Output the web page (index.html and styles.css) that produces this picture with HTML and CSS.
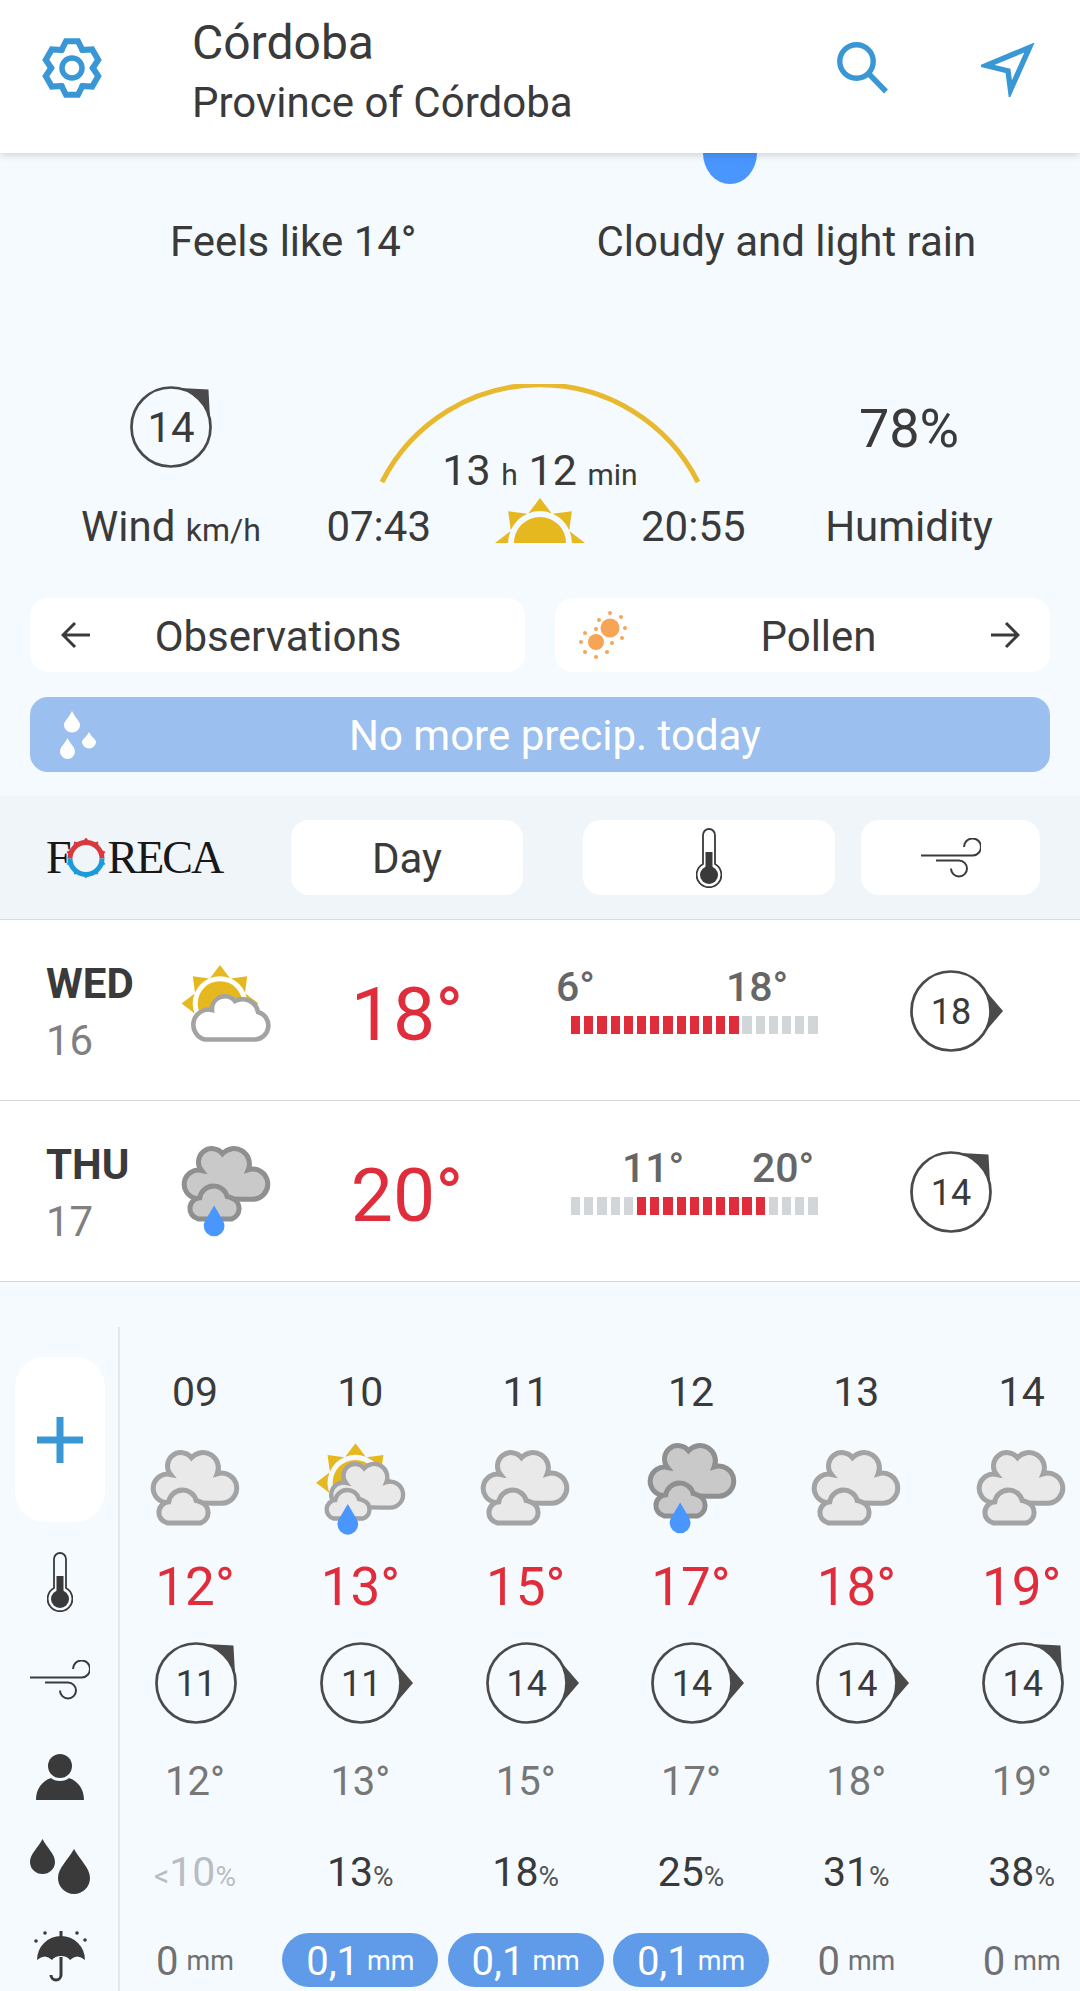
FILE: index.html
```html
<!DOCTYPE html>
<html lang="en">
<head>
<meta charset="utf-8">
<title>Córdoba weather</title>
<link rel="stylesheet" href="styles.css">
</head>
<body>
<svg class="defs" aria-hidden="true">
  <defs>
    <path id="drop" d="M553 567C575 605 584 615 584 628A31 31 0 0 1 522 628C522 615 531 605 553 567Z" fill="#4a96ff" stroke="none"/>
    <path id="cloud-back" d="M497 545A38 38 0 0 1 515 462A40 40 0 0 1 578 412A46 46 0 0 1 655 460A45 45 0 1 1 668 548L640 548Z"/>
    <path id="cloud-front" d="M505 607H606A33 33 0 0 0 606 545A40 40 0 0 0 592 540A42 42 0 0 0 510 544A32 32 0 0 0 505 607Z"/>
    <path id="ray" d="M0-50L13-32.9A35.4 35.4 0 0 0-13-32.9Z"/>
    <g id="sun" fill="#e6b820" stroke="none">
      <use href="#ray"/>
      <use href="#ray" transform="rotate(45)"/>
      <use href="#ray" transform="rotate(-45)"/>
      <use href="#ray" transform="rotate(90)"/>
      <use href="#ray" transform="rotate(-90)"/>
      <circle r="29"/>
    </g>
    <g id="wind-e">
      <circle cx="50" cy="50" r="38" fill="none" stroke="#4a4a4a" stroke-width="2.6"/>
      <path d="M76.9 23.1L100 50L76.9 76.9A38 38 0 0 0 76.9 23.1Z" fill="#4a4a4a"/>
    </g>
    <g id="wind-ne">
      <circle cx="50" cy="50" r="38" fill="none" stroke="#4a4a4a" stroke-width="2.6"/>
      <path d="M50 12L86 14L88 50A38 38 0 0 0 50 12Z" fill="#4a4a4a"/>
    </g>
    <g id="gauge">
      <path d="M7 36V7A6 6 0 0 1 19 7V36A12.4 12.4 0 1 1 7 36Z" fill="none" stroke="#3a3a3a" stroke-width="1.8"/>
      <rect x="9.5" y="24" width="7" height="24" fill="#3a3a3a"/>
      <circle cx="13" cy="47" r="9" fill="#3a3a3a"/>
    </g>
    <g id="gust" fill="none" stroke="#3a3a3a" stroke-width="2">
      <path d="M0 17.5H52A8.5 8.5 0 1 0 43 9"/>
      <path d="M15 22.5H38A8 8 0 1 1 30 30.5"/>
    </g>
    <path id="tooth" d="M-10.4-18L-6-26.800H6L10.400-18"/>
    <path id="nub" d="M-3-17L0-20.500L3-17Z"/>
  </defs>
</svg>

<header class="top-bar">
  <svg class="gear" viewBox="-30 -30 60 60">
    <use href="#tooth"/>
    <use href="#tooth" transform="rotate(60)"/>
    <use href="#tooth" transform="rotate(120)"/>
    <use href="#tooth" transform="rotate(180)"/>
    <use href="#tooth" transform="rotate(240)"/>
    <use href="#tooth" transform="rotate(300)"/>
    <circle class="gear-hub" r="10"/>
  </svg>
  <div class="place">
    <div class="city">Córdoba</div>
    <div class="province">Province of Córdoba</div>
  </div>
  <svg class="search" viewBox="0 0 54 54"><circle cx="19.5" cy="19.5" r="16.7"/><path d="M31 31L49 49.500"/></svg>
  <svg class="nav" viewBox="0 0 54 54"><path d="M48.500 4.500L5 22.500L27 28L29.500 47Z"/></svg>
</header>
<div class="blob"></div>

<section class="now">
  <span>Feels like 14°</span>
  <span>Cloudy and light rain</span>
</section>

<section class="stats">
  <div class="stat">
    <div class="stat-top">
      <div class="wind wind-lg"><svg class="ring" viewBox="0 0 100 100"><use href="#wind-ne"/></svg><span>14</span></div>
    </div>
    <div class="stat-label">Wind <small>km/h</small></div>
  </div>
  <div class="daylight">
    <div class="arc-box">
      <svg class="arc" viewBox="0 0 320 100"><path d="M2 98A177 177 0 0 1 318 98"/></svg>
      <div class="length">13 <small>h</small> 12 <small>min</small></div>
    </div>
    <div class="times">
      <span>07:43</span>
      <svg class="sunrise" viewBox="-50 -50 100 50"><use href="#sun"/></svg>
      <span>20:55</span>
    </div>
  </div>
  <div class="stat">
    <div class="stat-top humidity">78%</div>
    <div class="stat-label">Humidity</div>
  </div>
</section>

<section class="links">
  <div class="link">
    <svg class="arrow" viewBox="0 0 30 28"><path d="M29 14H2M14 2L2 14L14 26"/></svg>
    <span class="link-label">Observations</span>
  </div>
  <div class="link">
    <svg class="pollen" viewBox="0 0 48 48">
      <circle cx="31" cy="17" r="9.5"/><circle cx="17" cy="31" r="8"/>
      <circle cx="31" cy="2" r="2"/><circle cx="42" cy="6" r="2"/><circle cx="46" cy="17" r="2"/><circle cx="43" cy="27" r="2"/><circle cx="33" cy="32" r="2"/><circle cx="20" cy="9" r="2"/><circle cx="17" cy="18" r="2"/>
      <circle cx="6" cy="22" r="2"/><circle cx="2" cy="31" r="2"/><circle cx="6" cy="41" r="2"/><circle cx="17" cy="46" r="2"/><circle cx="28" cy="41" r="2"/>
    </svg>
    <span class="link-label pollen-label">Pollen</span>
    <svg class="arrow" viewBox="0 0 30 28"><path d="M1 14H28M16 2L28 14L16 26"/></svg>
  </div>
</section>

<section class="banner">
  <svg class="rain" viewBox="0 0 37 48">
    <path d="M12 0C16 8 20 10 20 14A8 7.5 0 0 1 4 14C4 10 8 8 12 0Z"/>
    <path d="M29 21C32 27 36 28 36 31A7 6.5 0 0 1 22 31C22 28 26 27 29 21Z"/>
    <path d="M7.500 27C11 34 15 36 15 40.500A7.500 7.500 0 0 1 0 40.500C0 36 4 34 7.500 27Z"/>
  </svg>
  <span class="banner-text">No more precip. today</span>
</section>

<section class="tabs">
  <div class="logo" aria-label="Foreca">
    <span>F</span>
    <svg class="logo-ring" viewBox="0 0 40 40">
      <path class="ring-red" d="M4 20.500A16 16 0 0 1 36 20.500"/>
      <path class="ring-blue" d="M36 20.500A16 16 0 0 1 4 20.500"/>
      <g class="nub-red" transform="translate(20 20)">
        <use href="#nub"/><use href="#nub" transform="rotate(36)"/><use href="#nub" transform="rotate(-36)"/><use href="#nub" transform="rotate(72)"/><use href="#nub" transform="rotate(-72)"/>
      </g>
      <g class="nub-blue" transform="translate(20 20)">
        <use href="#nub" transform="rotate(180)"/><use href="#nub" transform="rotate(144)"/><use href="#nub" transform="rotate(-144)"/><use href="#nub" transform="rotate(108)"/><use href="#nub" transform="rotate(-108)"/>
      </g>
    </svg>
    <span>RECA</span>
  </div>
  <div class="tab tab-day"><span>Day</span></div>
  <div class="tab tab-temp"><svg class="gauge-icon" viewBox="0 0 26 60"><use href="#gauge"/></svg></div>
  <div class="tab tab-wind"><svg class="gust-icon" viewBox="0 0 60 40"><use href="#gust"/></svg></div>
</section>

<section class="day-row">
  <div class="day"><b>WED</b><span>16</span></div>
  <svg class="wx-day sun-cloud" viewBox="0 0 90 78">
    <use href="#sun" transform="translate(39 38.500) scale(.77)"/>
    <path d="M24 74.500H74A14 14 0 0 0 77 47A16 16 0 0 0 54 36A13 13 0 0 0 31 45A15 15 0 0 0 24 74.500Z"/>
  </svg>
  <div class="day-temp">18°</div>
  <div class="range">
    <div class="range-labels"><span class="lo-6">6°</span><span>18°</span></div>
    <div class="bar">
      <i class="on"></i><i class="on"></i><i class="on"></i><i class="on"></i><i class="on"></i><i class="on"></i><i class="on"></i><i class="on"></i><i class="on"></i><i class="on"></i><i class="on"></i><i class="on"></i><i class="on"></i><i></i><i></i><i></i><i></i><i></i><i></i>
    </div>
  </div>
  <div class="day-wind"><div class="wind"><svg class="ring" viewBox="0 0 100 100"><use href="#wind-e"/></svg><span>18</span></div></div>
</section>

<section class="day-row">
  <div class="day"><b>THU</b><span>17</span></div>
  <svg class="wx-day dark" viewBox="445 380 290 290"><use href="#cloud-back"/><use href="#cloud-front"/><use href="#drop"/></svg>
  <div class="day-temp">20°</div>
  <div class="range">
    <div class="range-labels"><span class="lo-11">11°</span><span>20°</span></div>
    <div class="bar">
      <i></i><i></i><i></i><i></i><i></i><i class="on"></i><i class="on"></i><i class="on"></i><i class="on"></i><i class="on"></i><i class="on"></i><i class="on"></i><i class="on"></i><i class="on"></i><i class="on"></i><i></i><i></i><i></i><i></i>
    </div>
  </div>
  <div class="day-wind"><div class="wind"><svg class="ring" viewBox="0 0 100 100"><use href="#wind-ne"/></svg><span>14</span></div></div>
</section>

<section class="hourly">
  <aside class="side">
    <div class="plus"><svg class="plus-icon" viewBox="0 0 46 46"><path d="M23 0V46M0 23H46"/></svg></div>
    <svg class="gauge-icon" viewBox="0 0 26 60"><use href="#gauge"/></svg>
    <svg class="gust-icon" viewBox="0 0 60 40"><use href="#gust"/></svg>
    <svg class="person" viewBox="0 0 48 46"><circle cx="24" cy="12" r="12"/><path d="M0 46C0 35 6 27 15 24C19 28 29 28 33 24C42 27 48 35 48 46Z"/></svg>
    <svg class="drops" viewBox="0 0 60 55">
      <path d="M12.500 0C17 9 25 15 25 23A12.500 12 0 0 1 0 23C0 15 8 9 12.500 0Z"/>
      <path d="M44 10C50 21 60 29 60 39A16 16 0 0 1 28 39C28 29 38 21 44 10Z"/>
    </svg>
    <svg class="umbrella" viewBox="0 0 53 54">
      <path d="M3 31A24 24 0 0 1 51 31Q43 24 36 31Q33 27 27 27Q21 27 18 31Q11 24 3 31Z"/>
      <rect x="25.500" y="2" width="3" height="6"/>
      <path class="handle" d="M27 28V46A5 5 0 0 1 17 46"/>
      <circle cx="11" cy="4" r="1.800"/><circle cx="43" cy="4" r="1.800"/><circle cx="2" cy="12" r="1.800"/><circle cx="51" cy="11" r="1.800"/>
    </svg>
  </aside>
  <div class="hours">
    <div class="hour">09</div><div class="hour">10</div><div class="hour">11</div><div class="hour">12</div><div class="hour">13</div><div class="hour">14</div>

    <svg class="wx light" viewBox="445 380 290 290"><use href="#cloud-back"/><use href="#cloud-front"/></svg>
    <svg class="wx wx-sun light" viewBox="935 365 290 290">
      <use href="#sun" transform="translate(1065 487) scale(2.36)"/>
      <use href="#cloud-back" transform="translate(593.200 89.200) scale(.861)"/>
      <use href="#cloud-front" transform="translate(560.700 65.700) scale(.87)"/>
      <use href="#drop" transform="translate(489 -17)"/>
    </svg>
    <svg class="wx light" viewBox="445 380 290 290"><use href="#cloud-back"/><use href="#cloud-front"/></svg>
    <svg class="wx wx-dark dark" viewBox="445 380 290 290"><use href="#cloud-back"/><use href="#cloud-front"/><use href="#drop"/></svg>
    <svg class="wx light" viewBox="445 380 290 290"><use href="#cloud-back"/><use href="#cloud-front"/></svg>
    <svg class="wx light" viewBox="445 380 290 290"><use href="#cloud-back"/><use href="#cloud-front"/></svg>

    <div class="temp">12°</div><div class="temp">13°</div><div class="temp">15°</div><div class="temp">17°</div><div class="temp">18°</div><div class="temp">19°</div>

    <div class="wind"><svg class="ring" viewBox="0 0 100 100"><use href="#wind-ne"/></svg><span>11</span></div>
    <div class="wind"><svg class="ring" viewBox="0 0 100 100"><use href="#wind-e"/></svg><span>11</span></div>
    <div class="wind"><svg class="ring" viewBox="0 0 100 100"><use href="#wind-e"/></svg><span>14</span></div>
    <div class="wind"><svg class="ring" viewBox="0 0 100 100"><use href="#wind-e"/></svg><span>14</span></div>
    <div class="wind"><svg class="ring" viewBox="0 0 100 100"><use href="#wind-e"/></svg><span>14</span></div>
    <div class="wind"><svg class="ring" viewBox="0 0 100 100"><use href="#wind-ne"/></svg><span>14</span></div>

    <div class="feels">12°</div><div class="feels">13°</div><div class="feels">15°</div><div class="feels">17°</div><div class="feels">18°</div><div class="feels">19°</div>

    <div class="chance faint"><small class="lt">&lt;</small>10<small>%</small></div>
    <div class="chance">13<small>%</small></div>
    <div class="chance">18<small>%</small></div>
    <div class="chance">25<small>%</small></div>
    <div class="chance">31<small>%</small></div>
    <div class="chance">38<small>%</small></div>

    <div class="amount"><span>0</span><small>mm</small></div>
    <div class="amount wet"><span>0,1</span><small>mm</small></div>
    <div class="amount wet"><span>0,1</span><small>mm</small></div>
    <div class="amount wet"><span>0,1</span><small>mm</small></div>
    <div class="amount"><span>0</span><small>mm</small></div>
    <div class="amount"><span>0</span><small>mm</small></div>
  </div>
</section>
</body>
</html>
```
FILE: styles.css
```css
* { box-sizing: border-box; }
html, body { margin: 0; padding: 0; }
body {
  width: 1080px;
  height: 1991px;
  overflow: hidden;
  position: relative;
  background: #f5faff;
  color: #3a3a3a;
  font-family: Roboto, "Noto Sans", sans-serif;
  font-size: 42px;
  line-height: 1.2;
}
small { font-size: 30px; }
svg { display: block; flex: none; }
.defs { position: absolute; width: 0; height: 0; }

/* top bar */
.top-bar {
  position: relative;
  z-index: 2;
  display: flex;
  align-items: center;
  height: 153px;
  background: #fff;
  box-shadow: 0 2px 8px rgba(0, 0, 0, .16);
}
.gear { width: 60px; height: 60px; margin: 0 0 17px 42px; fill: none; stroke: #3a97d6; stroke-width: 6; stroke-linejoin: miter; stroke-linecap: round; }
.gear-hub { stroke-width: 5.5; }
.place { margin-left: 90px; flex: 1; padding-bottom: 8px; }
.city { font-size: 48px; line-height: 60px; }
.province { font-size: 42px; line-height: 60px; }
.search, .nav { width: 54px; height: 54px; fill: none; stroke: #3a97d6; stroke-width: 5.4; stroke-miterlimit: 10; }
.search { margin: 0 90px 15px 0; }
.nav { margin: 0 45px 13px 0; }
.blob {
  position: absolute;
  z-index: 1;
  left: 703px;
  top: 153px;
  width: 54px;
  height: 31px;
  background: #4a96ff;
  border-radius: 0 0 27px 27px / 0 0 31px 31px;
}

/* current */
.now { display: flex; gap: 180px; height: 231px; padding: 64px 0 0 170px; }

/* stats */
.stats { display: grid; grid-template-columns: 342px 396px 342px; height: 214px; }
.stat { display: flex; flex-direction: column; align-items: center; }
.stat-top { display: flex; align-items: center; justify-content: center; height: 83px; padding-top: 2px; margin-bottom: 36px; }
.humidity { font-size: 54px; padding-top: 8px; }
.stat-label { line-height: 48px; white-space: nowrap; }
.stat-label small { font-size: 32px; }
.wind {
  position: relative;
  display: grid;
  place-items: center;
  width: 79px;
  height: 79px;
  font-size: 36px;
}
.wind-lg { font-size: 42px; }
.ring { position: absolute; left: -12.5px; top: -12.5px; width: 104px; height: 104px; }
.wind span { position: relative; padding-top: 3px; }
.daylight { display: flex; flex-direction: column; align-items: center; min-width: 0; }
.arc-box { position: relative; width: 320px; height: 100px; }
.arc { width: 320px; height: 100px; fill: none; stroke: #e8b92e; stroke-width: 5; }
.length { position: absolute; left: -20px; right: -20px; top: 62px; text-align: center; font-size: 43px; line-height: 48px; }
.times { display: flex; align-items: center; gap: 60px; height: 48px; margin: 18px 8px 0 0; line-height: 48px; }
.times span { padding-top: 2px; }
.sunrise { width: 90px; height: 45px; margin: 0 -4px 12px 4px; overflow: hidden; }

/* links */
.links { display: grid; grid-template-columns: 495px 495px; gap: 30px; padding: 0 30px; }
.link {
  display: flex;
  align-items: center;
  height: 74px;
  padding: 0 30px 0 24px;
  background: #fff;
  border-radius: 18px;
}
.link-label { flex: 1; text-align: center; padding-top: 4px; }
.link:first-child { padding: 0 0 0 31px; }
.link:first-child .link-label { padding-right: 60px; }
.pollen-label { padding-left: 20px; }
.arrow { width: 30px; height: 28px; fill: none; stroke: #3a3a3a; stroke-width: 3; }
.pollen { width: 48px; height: 48px; fill: #f6a455; }

.banner {
  display: flex;
  align-items: center;
  height: 75px;
  margin: 25px 30px 0;
  padding-left: 30px;
  background: #9bbfef;
  border-radius: 18px;
}
.rain { width: 37px; height: 48px; fill: #fff; }
.banner-text { flex: 1; text-align: center; color: #fff; padding: 4px 37px 0 0; }

/* tabs */
.tabs {
  display: flex;
  align-items: center;
  height: 124px;
  margin-top: 24px;
  padding: 0 0 0 46px;
  background: #f0f5fa;
  border-bottom: 1px solid #d8dde2;
}
.logo {
  display: flex;
  align-items: center;
  width: 245px;
  font-family: "Liberation Serif", serif;
  font-size: 46px;
  color: #181818;
  letter-spacing: -2px;
}
.logo-ring { width: 40px; height: 40px; margin: 0 2px 0 -4px; fill: none; }
.ring-red, .ring-blue { stroke-width: 5; }
.ring-red { stroke: #d9393f; }
.ring-blue { stroke: #1d9bd8; }
.nub-red { fill: #d9393f; }
.nub-blue { fill: #1d9bd8; }
.tab {
  display: flex;
  align-items: center;
  justify-content: center;
  height: 75px;
  background: #fff;
  border-radius: 18px;
}
.tab span { padding-top: 4px; }
.tab-day { width: 232px; }
.tab-temp { width: 252px; margin-left: 60px; }
.tab-wind { width: 179px; margin-left: 26px; }
.gauge-icon { width: 26px; height: 60px; }
.gust-icon { width: 60px; height: 40px; }

/* day rows */
.day-row {
  display: grid;
  grid-template-columns: 135px 90px 272px 300px 214px;
  align-items: center;
  height: 181px;
  padding-left: 46px;
  background: #fff;
  border-bottom: 1px solid #d5d9dd;
}
.day { display: flex; flex-direction: column; line-height: 57px; padding-top: 3px; }
.day b { font-weight: 700; }
.day span { color: #808080; }
.wx-day { width: 97px; height: 97px; align-self: start; margin: 42px 0 0 -3px; }
.sun-cloud { width: 90px; height: 78px; margin: 45px 0 0; fill: #fff; stroke: #a3a3a3; stroke-width: 4.6; }
.dark { fill: #c9c9c9; stroke: #8f8f8f; stroke-width: 15; }
.light { fill: #e9e9e9; stroke: #a3a3a3; stroke-width: 15; }
.day-temp { text-align: center; font-size: 75px; color: #e02d3c; padding-top: 7px; }
.range { padding: 0 0 20px 28px; }
.range-labels { display: flex; height: 46px; font-size: 41px; font-weight: 500; line-height: 42px; color: #666; }
.lo-6 { margin-left: -15px; width: 170px; }
.lo-11 { margin-left: 51px; width: 130px; }
.bar { display: flex; gap: 3.9px; margin-top: 4px; }
.bar i { width: 9.3px; height: 18px; background: #d2d6d8; }
.bar .on { background: #e02d3c; }
.day-wind { display: flex; justify-content: center; padding: 2px 0 0 2px; }

/* hourly */
.hourly { display: flex; padding-top: 45px; height: 710px; }
.side {
  flex: none;
  display: grid;
  grid-template-rows: 183px 84px 112px 82px 96px 84px;
  justify-items: center;
  align-items: center;
  width: 120px;
  height: 664px;
  padding: 30px 0 0 2px;
  border-right: 2px solid #e3e8ec;
}
.plus {
  align-self: start;
  display: flex;
  align-items: center;
  justify-content: center;
  width: 90px;
  height: 165px;
  background: #fff;
  border-radius: 30px;
}
.plus-icon { width: 46px; height: 46px; fill: none; stroke: #3a97d6; stroke-width: 7; }
.person, .drops, .umbrella { fill: #3a3a3a; }
.person { width: 48px; height: 46px; }
.drops { width: 60px; height: 55px; }
.umbrella { width: 53px; height: 54px; }
.handle { fill: none; stroke: #3a3a3a; stroke-width: 3; }

.hours {
  display: grid;
  grid-template-columns: repeat(6, 150px);
  grid-template-rows: 67px 116px 92px 100px 96px 88px 86px;
  column-gap: 15.33px;
  justify-items: center;
  align-items: center;
  flex: none;
  padding-top: 30px;
}
.hour { font-size: 41px; padding-top: 5px; }
.wx { width: 97px; height: 97px; align-self: start; margin-top: 23px; }
.wx-sun { margin-top: 18px; }
.wx-dark { margin: 16px 0 0 3px; }
.temp { font-size: 53px; color: #e02d3c; padding-top: 4px; }
.hours .wind { margin: 2px 0 0 2px; }
.feels { font-size: 40px; color: #777; padding-top: 4px; }
.chance { font-size: 41px; padding-top: 2px; }
.chance small { font-size: 28px; color: #555; }
.chance .lt { font-size: 30px; }
.faint, .faint small { color: #b9bdc2; }
.amount {
  display: flex;
  align-items: center;
  justify-content: center;
  gap: 8px;
  width: 156px;
  height: 54px;
  margin-top: 2px;
  border-radius: 27px;
  font-size: 40px;
  color: #707070;
  white-space: nowrap;
}
.amount small { font-size: 27px; padding-top: 2px; }
.amount span { padding-top: 3px; }
.wet { background: #5f9be8; color: #fff; }
```
